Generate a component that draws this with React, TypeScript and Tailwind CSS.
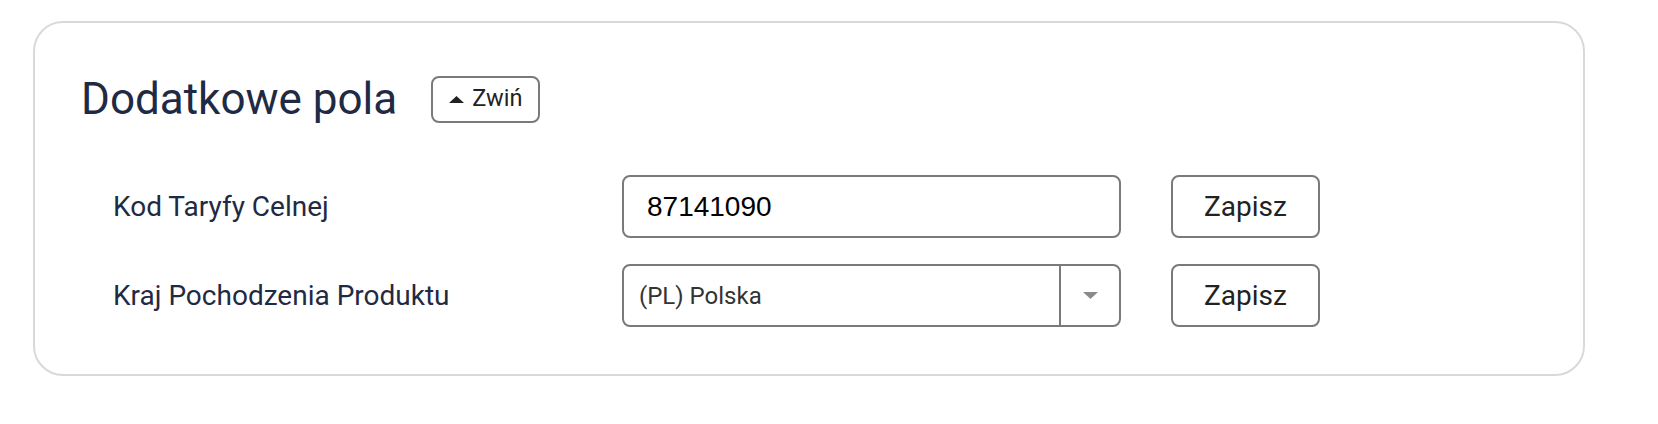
const fields = [
  { id: "tariff", label: "Kod Taryfy Celnej", kind: "input", value: "87141090" },
  { id: "origin", label: "Kraj Pochodzenia Produktu", kind: "select", value: "(PL) Polska" },
]

function Triangle({ up, className }: { up?: boolean; className?: string }) {
  return (
    <svg viewBox="0 0 15 7" className={className} aria-hidden>
      <path d={up ? "M0 7 L7.5 0 L15 7 Z" : "M0 0 L15 0 L7.5 7 Z"} fill="currentColor" />
    </svg>
  )
}

export default function App() {
  return (
    <div className="min-h-screen bg-white font-['Roboto',_'Liberation_Sans',_sans-serif]">
      <div className="pl-[33px] pt-[21px]">
        {/* Panel */}
        <section className="w-[1552px] rounded-[30px] border-2 border-[#d9d9d9] bg-white pl-[46px] pt-[50px] pb-[47px]">
          {/* Header */}
          <div className="flex items-center gap-[34px]">
            <h2 className="text-[44px] leading-[52px] font-normal text-[#1f2a44]">Dodatkowe pola</h2>
            <button className="flex h-[47px] items-center gap-[8px] rounded-[8px] border-2 border-[#7a7a7a] bg-white px-[16px] text-[23.5px] text-[#222]">
              <Triangle up className="h-[7px] w-[15px] text-[#222]" />
              <span>Zwiń</span>
            </button>
          </div>

          {/* Fields */}
          <div className="mt-[50px] flex flex-col gap-[26px]">
            {fields.map((f) => (
              <div key={f.id} className="flex items-center">
                <div className="w-[541px] pl-[32px] text-[28px] text-[#1f2a44]">{f.label}</div>
                {f.kind === "input" ? (
                  <input
                    defaultValue={f.value}
                    className="h-[63px] w-[499px] rounded-[8px] border-2 border-[#7a7a7a] bg-white px-[23px] font-['Liberation_Sans',_Arial,_sans-serif] text-[28px] text-black outline-none"
                  />
                ) : (
                  <div className="flex h-[63px] w-[499px] items-stretch rounded-[8px] border-2 border-[#7a7a7a] bg-white">
                    <div className="flex flex-1 items-center pl-[15px] text-[24px] text-[#333]">{f.value}</div>
                    <div className="flex w-[60px] items-center justify-center border-l-2 border-[#7a7a7a]">
                      <Triangle className="h-[7px] w-[15px] text-[#8a8a8a]" />
                    </div>
                  </div>
                )}
                <button className="ml-[50px] h-[63px] w-[149px] rounded-[8px] border-2 border-[#7a7a7a] bg-white text-[28px] text-[#222]">
                  Zapisz
                </button>
              </div>
            ))}
          </div>
        </section>
      </div>
    </div>
  )
}
